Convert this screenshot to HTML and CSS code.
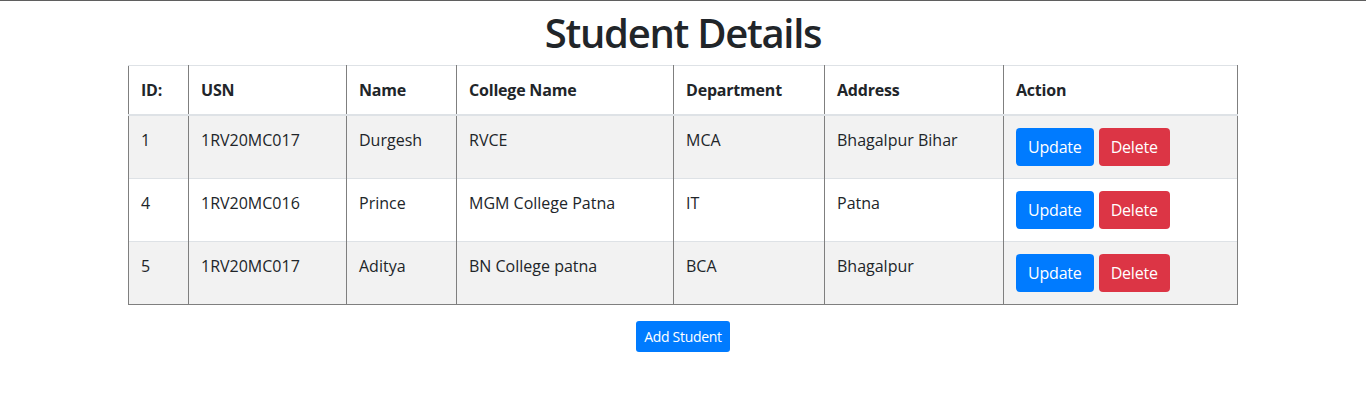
FILE: index.html
```html
<!DOCTYPE html>
<html lang="en">
<head>
<meta charset="utf-8">
<title>Student Details</title>
<link rel="stylesheet" href="styles.css">
</head>
<body>
<div class="page">
  <h1 class="title">Student Details</h1>
  <table class="students">
    <colgroup>
      <col class="c-id"><col class="c-usn"><col class="c-name"><col class="c-college"><col class="c-dept"><col class="c-addr"><col class="c-action">
    </colgroup>
    <thead>
      <tr><th>ID:</th><th>USN</th><th>Name</th><th>College Name</th><th>Department</th><th>Address</th><th>Action</th></tr>
    </thead>
    <tbody>
      <tr class="odd">
        <td>1</td><td>1RV20MC017</td><td>Durgesh</td><td>RVCE</td><td>MCA</td><td>Bhagalpur Bihar</td>
        <td><div class="actions"><button class="btn btn-primary">Update</button><button class="btn btn-danger">Delete</button></div></td>
      </tr>
      <tr>
        <td>4</td><td>1RV20MC016</td><td>Prince</td><td>MGM College Patna</td><td>IT</td><td>Patna</td>
        <td><div class="actions"><button class="btn btn-primary">Update</button><button class="btn btn-danger">Delete</button></div></td>
      </tr>
      <tr class="odd">
        <td>5</td><td>1RV20MC017</td><td>Aditya</td><td>BN College patna</td><td>BCA</td><td>Bhagalpur</td>
        <td><div class="actions"><button class="btn btn-primary">Update</button><button class="btn btn-danger">Delete</button></div></td>
      </tr>
    </tbody>
  </table>
  <div class="footer">
    <button class="btn btn-primary btn-sm">Add Student</button>
  </div>
</div>
</body>
</html>
```
FILE: styles.css
```css
html, body {
  margin: 0;
  padding: 0;
  background: #fff;
}
body {
  font-family: "Open Sans", "Noto Sans", "Liberation Sans", sans-serif;
  font-size: 16px;
  line-height: 24px;
  color: #212529;
  border-top: 1px solid #5f5f5f;
}
.page {
  width: 1110px;
  margin: 0 auto;
  padding-top: 8px;
}
.title {
  margin: 0 0 8px 0;
  text-align: center;
  font-size: 40px;
  line-height: 48px;
  font-weight: 600;
  letter-spacing: -1.3px;
}
.students {
  width: 1109px;
  border-collapse: collapse;
  table-layout: fixed;
  border-bottom: 1px solid #7f7f7f;
}
.c-id { width: 60px; }
.c-usn { width: 158px; }
.c-name { width: 110px; }
.c-college { width: 217px; }
.c-dept { width: 151px; }
.c-addr { width: 179px; }
.c-action { width: 234px; }
.students th, .students td {
  text-align: left;
  vertical-align: top;
  padding: 12px;
  border-top: 1px solid #dee2e6;
  border-left: 1px solid #7f7f7f;
  border-right: 1px solid #7f7f7f;
}
.students th {
  font-weight: 700;
  border-bottom: 2px solid #dee2e6;
  letter-spacing: -0.2px;
}
.students tr.odd td {
  background: #f2f2f2;
}
.actions {
  display: flex;
  gap: 5px;
}
.btn {
  font-family: inherit;
  font-size: 16px;
  line-height: 24px;
  padding: 7px 12px;
  border: 0;
  border-radius: 4px;
  color: #fff;
  cursor: pointer;
  letter-spacing: -0.2px;
}
.btn-primary { background: #007bff; }
.btn-danger { background: #dc3545; }
.btn-sm {
  font-size: 14px;
  line-height: 21px;
  padding: 5px 8px;
  border-radius: 3px;
  letter-spacing: -0.3px;
}
.footer {
  display: flex;
  justify-content: center;
  padding-top: 16px;
}
```
